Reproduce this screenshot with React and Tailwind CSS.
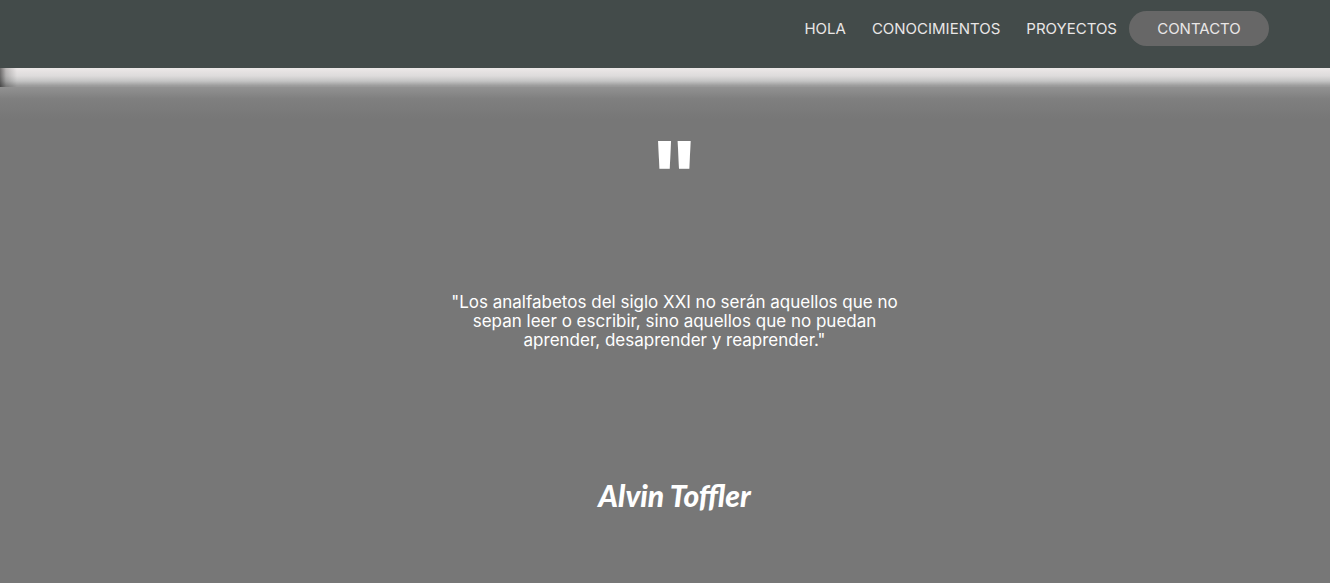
const links = [
  { label: 'HOLA', href: '#hola' },
  { label: 'CONOCIMIENTOS', href: '#conocimientos' },
  { label: 'PROYECTOS', href: '#proyectos' },
];

function Header() {
  return (
    <header className="flex h-[68px] items-start justify-end bg-[#434b4a] pt-[11px] pr-[61px]">
      <nav className="flex items-center text-[15px] leading-[35px] text-[#e9e6e6]">
        <ul className="flex items-center gap-[26px] pr-3">
          {links.map((link) => (
            <li key={link.href}>
              <a href={link.href}>{link.label}</a>
            </li>
          ))}
        </ul>
        <a href="#contacto" className="w-[140px] rounded-full bg-[#676767] text-center">
          CONTACTO
        </a>
      </nav>
    </header>
  );
}

export default function App() {
  return (
    <div className="flex min-h-screen flex-col bg-[#777777] font-['Inter',sans-serif]">
      <Header />
      <div className="h-[19px] bg-[linear-gradient(to_right,#00000088,#00000033_6px,transparent_17px),linear-gradient(to_bottom,#ece8e8,#dddbdb_8px,#c4c4c4_13px,#999999_18px)]" />
      <main className="flex grow flex-col items-center bg-[linear-gradient(to_bottom,#929292,#7f7f7f_12px,#777777_32px)] pt-10 pl-[19px] text-white">
        <figure className="flex flex-col items-center text-center">
          <div aria-hidden="true" className="h-[166px] text-[92px] leading-[96px] font-bold">
            &quot;
          </div>
          <blockquote className="w-[460px] text-[17px] leading-[19px]">
            &quot;Los analfabetos del siglo XXI no serán aquellos que no sepan leer o escribir, sino
            aquellos que no puedan aprender, desaprender y reaprender.&quot;
          </blockquote>
          <figcaption className="mt-[125px] font-['Lato',sans-serif] text-[30px] leading-10 font-black italic">
            Alvin Toffler
          </figcaption>
        </figure>
      </main>
    </div>
  );
}
